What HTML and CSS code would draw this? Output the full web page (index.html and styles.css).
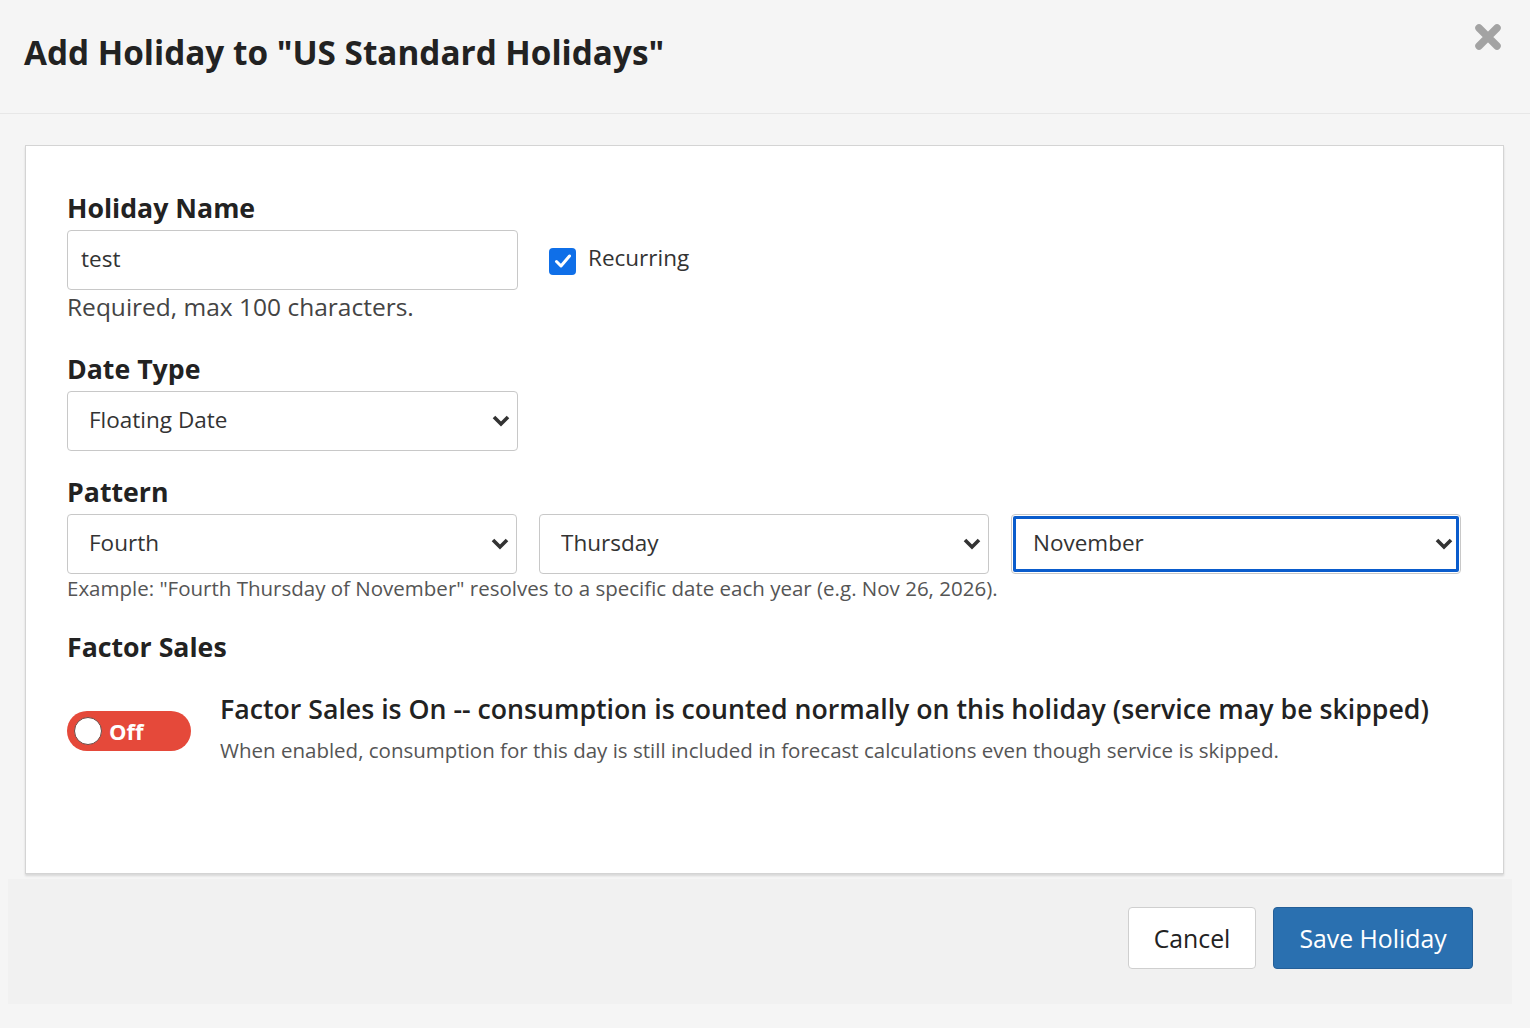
FILE: index.html
```html
<!DOCTYPE html>
<html>
  <head>
    <title>Add Holiday</title>
    <link rel="stylesheet" href="styles.css">
  </head>
  <body>
    <main class="modal">
      <header class="modal-header">
        <h1 class="modal-title">Add Holiday to "US Standard Holidays"</h1>
        <button class="close" aria-label="Close">
          <svg width="28" height="28" viewBox="0 0 28 28">
            <path d="M5 5 L23 23 M23 5 L5 23" stroke="#a3a3a3" stroke-width="7.5" stroke-linecap="round"/>
          </svg>
        </button>
      </header>

      <section class="panel">
        <label class="field-label" for="txtName">Holiday Name</label>
        <div class="name-row">
          <input class="text-input" id="txtName" type="text" value="test">
          <label class="check">
            <span class="check-box">
              <svg width="18" height="16" viewBox="0 0 18 16">
                <path d="M2.5 8.5 L7 13 L15.5 3" fill="none" stroke="#fff" stroke-width="3" stroke-linecap="round" stroke-linejoin="round"/>
              </svg>
            </span>
            Recurring
          </label>
        </div>
        <div class="help">Required, max 100 characters.</div>

        <label class="field-label spaced" for="selType">Date Type</label>
        <div class="select-wrap narrow">
          <select class="select" id="selType"><option>Floating Date</option></select>
          <svg class="chevron" width="20" height="14" viewBox="0 0 20 14"><path d="M3 3 L10 10 L17 3" fill="none" stroke="#333" stroke-width="3.6"/></svg>
        </div>

        <label class="field-label pattern-label" for="selNth">Pattern</label>
        <div class="pattern">
          <div class="select-wrap">
            <select class="select" id="selNth"><option>Fourth</option></select>
            <svg class="chevron" width="20" height="14" viewBox="0 0 20 14"><path d="M3 3 L10 10 L17 3" fill="none" stroke="#333" stroke-width="3.6"/></svg>
          </div>
          <div class="select-wrap">
            <select class="select" id="selDay"><option>Thursday</option></select>
            <svg class="chevron" width="20" height="14" viewBox="0 0 20 14"><path d="M3 3 L10 10 L17 3" fill="none" stroke="#333" stroke-width="3.6"/></svg>
          </div>
          <div class="select-wrap">
            <select class="select focused" id="selMonth"><option>November</option></select>
            <svg class="chevron" width="20" height="14" viewBox="0 0 20 14"><path d="M3 3 L10 10 L17 3" fill="none" stroke="#333" stroke-width="3.6"/></svg>
          </div>
        </div>
        <div class="example">Example: "Fourth Thursday of November" resolves to a specific date each year (e.g. Nov 26, 2026).</div>

        <div class="field-label factor-label">Factor Sales</div>
        <div class="factor-row">
          <div class="toggle off">
            <span class="knob"></span>
            <span class="toggle-text">Off</span>
          </div>
          <div class="factor-info">
            <div class="factor-title">Factor Sales is On -- consumption is counted normally on this holiday (service may be skipped)</div>
            <div class="factor-sub">When enabled, consumption for this day is still included in forecast calculations even though service is skipped.</div>
          </div>
        </div>
      </section>

      <footer class="modal-footer">
        <button class="btn btn-default">Cancel</button>
        <button class="btn btn-primary">Save Holiday</button>
      </footer>
    </main>
  </body>
</html>
```

FILE: styles.css
```css
body
{
  margin: 0;
  background-color: #f5f5f5;
  font-family: "Open Sans", "Liberation Sans", sans-serif;
  color: #333;
}

.modal
{
  min-height: 1028px;
}

.modal-header
{
  display: flex;
  justify-content: space-between;
  align-items: flex-start;
  height: 114px;
  box-sizing: border-box;
  padding: 23px 28px 0 24px;
  border-bottom: 1px solid #e7e7e7;
}

.modal-title
{
  margin: 9px 0 0 0;
  font-size: 33.3px;
  line-height: 40px;
  font-weight: 700;
  color: #222;
}

.close
{
  border: none;
  background: none;
  padding: 0;
  width: 28px;
  height: 28px;
}

.panel
{
  margin: 31px 26px 0 25px;
  padding: 47px 42px 0 41px;
  height: 729px;
  box-sizing: border-box;
  background-color: #fff;
  border: 1px solid #d4d4d4;
  box-shadow: 0 2px 2px rgba(0, 0, 0, 0.12);
}

.field-label
{
  display: block;
  font-size: 26.7px;
  line-height: 30px;
  font-weight: 700;
  color: #222;
  margin-bottom: 7px;
}

.field-label.spaced  { margin-top: 32px; }
.field-label.pattern-label { margin-top: 26px; }
.field-label.factor-label  { margin-top: 30px; }

.name-row
{
  display: flex;
  align-items: center;
  gap: 31px;
}

.text-input,
.select
{
  box-sizing: border-box;
  height: 60px;
  border: 1px solid #c8c8c8;
  border-radius: 4px;
  background: #fff;
  font-family: inherit;
  font-size: 22.5px;
  color: #333;
}

.text-input
{
  width: 451px;
  padding: 0 13px;
  padding-bottom: 3px;
}

.check
{
  display: flex;
  align-items: center;
  gap: 12px;
  font-size: 22.5px;
  color: #333;
  margin-top: -6px;
}

.check-box
{
  display: flex;
  align-items: center;
  justify-content: center;
  width: 27px;
  height: 27px;
  margin-top: 8px;
  border-radius: 4px;
  background-color: #0f6fe8;
}

.help
{
  font-size: 24.5px;
  line-height: 30px;
  margin-top: 2px;
  color: #444;
}

.select-wrap
{
  position: relative;
}

.select-wrap.narrow { width: 451px; }

.select
{
  width: 100%;
  padding: 0 21px 4px 21px;
  appearance: none;
  -webkit-appearance: none;
}

.select.focused
{
  outline: 3px solid #0a5ccc;
  outline-offset: -5px;
}

.chevron
{
  position: absolute;
  right: 7px;
  top: 23px;
  pointer-events: none;
}

.pattern
{
  display: grid;
  grid-template-columns: repeat(3, 1fr);
  gap: 22px;
}

.example
{
  font-size: 20.5px;
  line-height: 28px;
  margin-top: 0;
  color: #555;
}

.factor-row
{
  display: flex;
  align-items: flex-start;
  gap: 29px;
  margin-top: 32px;
}

.toggle
{
  flex: none;
  display: flex;
  align-items: center;
  gap: 7px;
  width: 124px;
  height: 40px;
  margin-top: 17px;
  padding-left: 7px;
  box-sizing: border-box;
  border-radius: 20px;
  background-color: #e5493a;
}

.knob
{
  width: 28px;
  height: 28px;
  box-sizing: border-box;
  border-radius: 50%;
  background-color: #fff;
  border: 1px solid #6b4a45;
}

.toggle-text
{
  font-size: 22px;
  font-weight: 700;
  color: #fff;
}

.factor-title
{
  font-size: 26.7px;
  line-height: 30px;
  font-weight: 600;
  color: #222;
}

.factor-sub
{
  font-size: 20.5px;
  line-height: 28px;
  margin-top: 12px;
  color: #555;
}

.modal-footer
{
  display: flex;
  justify-content: flex-end;
  gap: 17px;
  margin: 5px 18px 0 8px;
  padding: 28px 39px 35px 0;
  background-color: #f1f1f1;
}

.btn
{
  height: 62px;
  border-radius: 4px;
  font-family: inherit;
  font-size: 24.8px;
}

.btn-default
{
  width: 128px;
  background-color: #fff;
  border: 1px solid #cfcfcf;
  color: #222;
}

.btn-primary
{
  width: 200px;
  background-color: #2a70b0;
  border: 1px solid #245f98;
  color: #fff;
}
```
